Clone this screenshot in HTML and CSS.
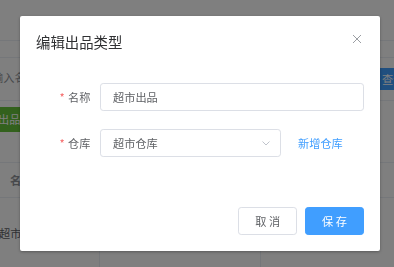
FILE: index.html
```html
<!DOCTYPE html>
<html lang="zh-CN">
<head>
    <meta charset="UTF-8">
    <meta name="viewport" content="width=device-width, initial-scale=1.0">
    <title>编辑出品类型</title>
    <link rel="stylesheet" href="styles.css">
</head>
<body>
    <div class="page">
        <div class="bar bar-top"></div>
        <div class="bar bar-tabs"></div>
        <div class="bar search-row">
            <span class="search-input">输入名称</span>
            <span class="btn-query">查询</span>
        </div>
        <div class="bar tool-row">
            <span class="btn-add">出品类型</span>
        </div>
        <div class="bar table-head">
            <span class="cell cell-name">名称</span>
            <span class="cell cell-mid"></span>
            <span class="cell"></span>
        </div>
        <div class="table-row">
            <span class="cell cell-name row-text">超市抄送</span>
            <span class="cell cell-mid"></span>
            <span class="cell"></span>
        </div>
    </div>

    <div class="mask"></div>

    <div class="dialog">
        <div class="dialog-header">
            <span class="dialog-title">编辑出品类型</span>
            <svg class="close" width="10" height="10" viewBox="0 0 10 10">
                <path d="M1 1 L9 9 M9 1 L1 9" stroke="#909399" stroke-width="0.9" fill="none"/>
            </svg>
        </div>
        <div class="dialog-body">
            <div class="form-item">
                <label class="form-label"><span class="star">*</span>名称</label>
                <div class="input">超市出品</div>
            </div>
            <div class="form-item">
                <label class="form-label"><span class="star">*</span>仓库</label>
                <div class="input select">
                    <span>超市仓库</span>
                    <svg width="8" height="5" viewBox="0 0 8 5">
                        <polyline points="0.5,0.5 4,4 7.5,0.5" stroke="#c0c4cc" stroke-width="1" fill="none"/>
                    </svg>
                </div>
                <a class="link">新增仓库</a>
            </div>
        </div>
        <div class="dialog-footer">
            <button class="btn">取 消</button>
            <button class="btn btn-primary">保 存</button>
        </div>
    </div>
</body>
</html>
```

FILE: styles.css
```css
body {
    margin: 0;
    width: 394px;
    height: 267px;
    overflow: hidden;
    font-family: "Noto Sans CJK SC", "Noto Sans", sans-serif;
    background: #ffffff;
}
.page {
    font-size: 11.2px;
    color: #606266;
}
.bar {
    border-bottom: 1px solid #ebeef5;
    box-sizing: border-box;
}
.bar-top {
    height: 41px;
}
.bar-tabs {
    height: 17px;
}
.search-row {
    height: 43px;
    display: flex;
    align-items: flex-start;
    justify-content: space-between;
}
.search-input {
    margin-left: -8px;
    margin-top: 11px;
    color: #909399;
}
.btn-query {
    margin-top: 10px;
    width: 30px;
    height: 22px;
    line-height: 22px;
    background: #409eff;
    color: #ffffff;
    padding-left: 2px;
    margin-right: -16px;
    box-sizing: border-box;
}
.tool-row {
    height: 62px;
    padding-top: 6px;
}
.btn-add {
    display: inline-block;
    height: 25px;
    line-height: 25px;
    background: #67c23a;
    color: #ffffff;
    margin-left: -2px;
    padding: 0 6px 0 0;
}
.table-head {
    height: 35px;
    display: flex;
    font-weight: bold;
    color: #909399;
}
.table-row {
    height: 70px;
    display: flex;
}
.cell {
    flex: 1;
    display: flex;
    align-items: center;
}
.cell-name {
    flex: 0 0 101px;
    border-right: 1px solid #ebeef5;
    padding-left: 10px;
    box-sizing: border-box;
}
.cell-mid {
    flex: 0 0 160px;
    border-right: 1px solid #ebeef5;
}
.table-head .cell {
    border-right: none;
}
.row-text {
    padding-left: 0;
    margin-left: -1px;
    color: #606266;
}
.mask {
    position: fixed;
    inset: 0;
    background: rgba(0, 0, 0, 0.5);
}
.dialog {
    position: absolute;
    left: 20px;
    top: 16px;
    width: 360px;
    background: #ffffff;
    border-radius: 2px;
    box-shadow: 0 1px 3px rgba(0, 0, 0, 0.3);
}
.dialog-header {
    display: flex;
    justify-content: space-between;
    align-items: flex-start;
    padding: 16px 16px 8px;
}
.dialog-title {
    font-size: 14.4px;
    line-height: 19.2px;
    color: #303133;
}
.close {
    margin-top: 2px;
    margin-right: 2px;
}
.dialog-body {
    padding: 24px 16px;
}
.form-item {
    display: flex;
    align-items: center;
    margin-bottom: 18px;
}
.form-label {
    width: 64px;
    padding-right: 9.6px;
    box-sizing: border-box;
    text-align: right;
    font-size: 11.2px;
    line-height: 28px;
    color: #606266;
}
.star {
    color: #f56c6c;
    margin-right: 3.2px;
}
.input {
    flex: 1;
    height: 28px;
    box-sizing: border-box;
    border: 1px solid #dcdfe6;
    border-radius: 3.2px;
    padding: 0 12px;
    font-size: 11.2px;
    line-height: 26px;
    color: #606266;
}
.select {
    flex: 0 0 181px;
    display: flex;
    align-items: center;
    justify-content: space-between;
    padding-right: 10px;
}
.link {
    margin-left: 17px;
    font-size: 11.2px;
    line-height: 28px;
    color: #409eff;
}
.dialog-footer {
    padding: 8px 16px 16px;
    display: flex;
    justify-content: flex-end;
    gap: 8px;
}
.btn {
    height: 28px;
    padding: 0 16px;
    font-family: inherit;
    font-size: 11.2px;
    border: 1px solid #dcdfe6;
    border-radius: 3.2px;
    background: #ffffff;
    color: #606266;
}
.btn-primary {
    background: #409eff;
    border-color: #409eff;
    color: #ffffff;
}
```
